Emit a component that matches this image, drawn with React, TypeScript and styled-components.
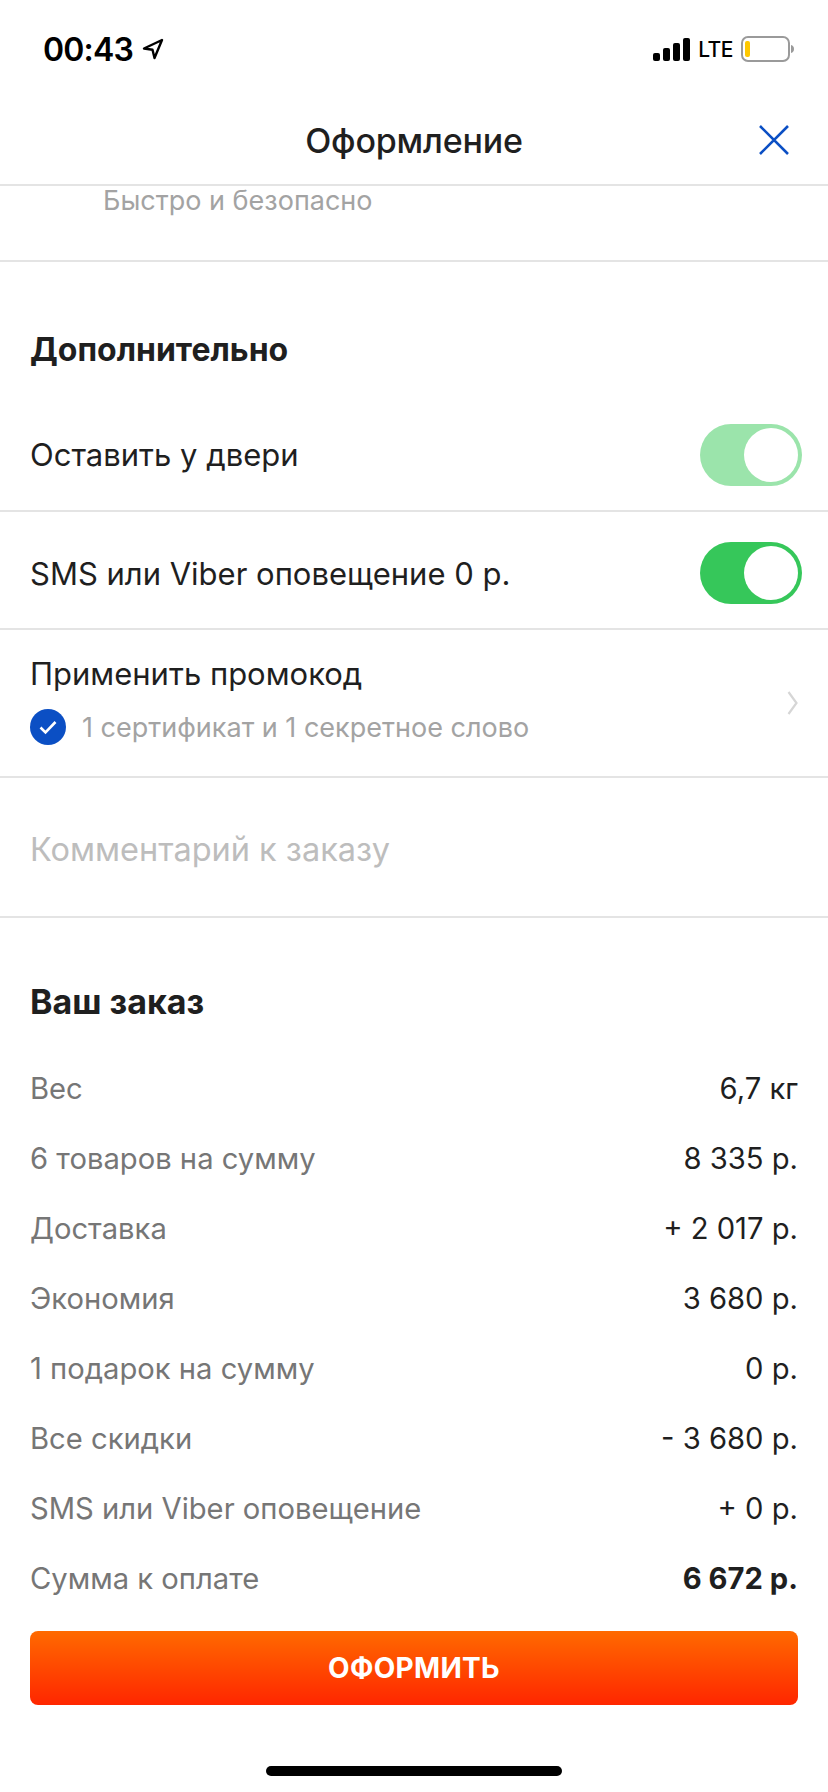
import React from 'react'
import styled, { createGlobalStyle } from 'styled-components'

const GlobalStyle = createGlobalStyle`
  html, body {
    margin: 0;
    padding: 0;
    background: #fff;
  }
  * {
    box-sizing: border-box;
  }
`

const Page = styled.div`
  width: 828px;
  height: 1792px;
  overflow: hidden;
  display: flex;
  flex-direction: column;
  background: #fff;
  color: #1f1f1f;
  font-family: Inter, "Noto Sans", sans-serif;
`

const StatusBar = styled.div`
  height: 88px;
  padding: 10px 34px 0 43px;
  display: flex;
  align-items: center;
  justify-content: space-between;
  color: #000;
`

const Time = styled.div`
  display: flex;
  align-items: center;
  gap: 9px;
  font-size: 32px;
  font-weight: 600;
  letter-spacing: -0.8px;
`

const StatusRight = styled.div`
  display: flex;
  align-items: center;
  gap: 8px;
`

const Lte = styled.span`
  font-size: 21px;
  font-weight: 500;
  letter-spacing: -0.5px;
`

const Header = styled.header`
  height: 98px;
  padding: 8px 39px 0;
  display: flex;
  align-items: center;
  justify-content: space-between;
  border-bottom: 2px solid #e4e4e4;
`

const HeaderSide = styled.div`
  width: 30px;
  height: 30px;
`

const Title = styled.h1`
  margin: 0;
  font-size: 34px;
  font-weight: 500;
  letter-spacing: -0.2px;
`

const PaymentNote = styled.div`
  height: 76px;
  padding: 0 0 45px 103px;
  display: flex;
  align-items: center;
  font-size: 27px;
  color: #a3a3a3;
  border-bottom: 2px solid #e4e4e4;
`

const SectionTitle = styled.h2<{ $height: number; $size: number }>`
  margin: 0;
  height: ${p => p.$height}px;
  padding: 0 30px;
  display: flex;
  align-items: flex-end;
  font-size: ${p => p.$size}px;
  font-weight: 700;
`

const ToggleRow = styled.div<{ $height: number; $top: number }>`
  height: ${p => p.$height}px;
  padding: ${p => p.$top}px 26px 0 30px;
  display: flex;
  align-items: center;
  justify-content: space-between;
  font-size: 31px;
  border-bottom: 2px solid #e4e4e4;
`

const Track = styled.div<{ $pale?: boolean }>`
  width: 102px;
  height: 62px;
  padding: 4px;
  display: flex;
  justify-content: flex-end;
  border-radius: 31px;
  background: ${p => (p.$pale ? '#9be4ab' : '#36c75a')};
`

const Knob = styled.div`
  width: 54px;
  height: 54px;
  border-radius: 50%;
  background: #fff;
`

const PromoRow = styled.div`
  height: 148px;
  padding: 0 30px;
  display: flex;
  align-items: center;
  justify-content: space-between;
  border-bottom: 2px solid #e4e4e4;
`

const PromoText = styled.div`
  padding-bottom: 6px;
  display: flex;
  flex-direction: column;
  gap: 17px;
  font-size: 31px;
`

const PromoHint = styled.div`
  display: flex;
  align-items: center;
  gap: 16px;
  font-size: 27px;
  color: #a3a3a3;
`

const Comment = styled.div`
  height: 140px;
  padding: 5px 30px 0;
  display: flex;
  align-items: center;
  font-size: 32.5px;
  color: #bdbdbd;
  border-bottom: 2px solid #e4e4e4;
`

const Summary = styled.div`
  margin-top: 31px;
  display: flex;
  flex-direction: column;
`

const SummaryRow = styled.div`
  height: 70.1px;
  padding: 0 30px;
  display: flex;
  align-items: center;
  justify-content: space-between;
  font-size: 29.2px;
`

const SummaryLabel = styled.span`
  color: #767676;
`

const SummaryValue = styled.span<{ $bold?: boolean }>`
  font-weight: ${p => (p.$bold ? 700 : 400)};
`

const SubmitButton = styled.button`
  margin: 17px 30px 0;
  height: 74px;
  flex-shrink: 0;
  border: 0;
  border-radius: 8px;
  background: linear-gradient(180deg, #ff6a00 0%, #ff2600 100%);
  color: #fff;
  font-family: inherit;
  font-size: 28px;
  font-weight: 700;
  letter-spacing: 0.3px;
`

const HomeIndicator = styled.div`
  margin: 61px auto 0;
  width: 296px;
  height: 10px;
  flex-shrink: 0;
  border-radius: 5px;
  background: #000;
`

const rows: [string, string][] = [
  ['Вес', '6,7 кг'],
  ['6 товаров на сумму', '8 335 р.'],
  ['Доставка', '+ 2 017 р.'],
  ['Экономия', '3 680 р.'],
  ['1 подарок на сумму', '0 р.'],
  ['Все скидки', '- 3 680 р.'],
  ['SMS или Viber оповещение', '+ 0 р.'],
]

const App = () => {
  return (
    <Page>
      <GlobalStyle />
      <StatusBar>
        <Time>
          00:43
          <svg width="22" height="22" viewBox="0 0 22 22" fill="none">
            <path d="M20 2 2 10.5l8.5 1.2L12.5 20z" stroke="#000" strokeWidth="2.4" strokeLinejoin="round" />
          </svg>
        </Time>
        <StatusRight>
          <svg width="37" height="23" viewBox="0 0 37 23">
            <rect x="0" y="15" width="7" height="8" rx="2" />
            <rect x="10" y="10" width="7" height="13" rx="2" />
            <rect x="20" y="5" width="7" height="18" rx="2" />
            <rect x="30" y="0" width="7" height="23" rx="2" />
          </svg>
          <Lte>LTE</Lte>
          <svg width="53" height="26" viewBox="0 0 53 26">
            <rect x="1" y="1" width="47" height="24" rx="6" fill="none" stroke="#9a9a9a" strokeWidth="2" />
            <rect x="4" y="5" width="5" height="16" rx="2" fill="#ffc800" />
            <path d="M50 9c2 .6 3 2 3 4s-1 3.400-3 4z" fill="#9a9a9a" />
          </svg>
        </StatusRight>
      </StatusBar>
      <Header>
        <HeaderSide />
        <Title>Оформление</Title>
        <svg width="30" height="30" viewBox="0 0 30 30">
          <path d="M1 1l28 28M29 1 1 29" stroke="#0b4fc4" strokeWidth="2.6" fill="none" />
        </svg>
      </Header>
      <PaymentNote>Быстро и безопасно</PaymentNote>
      <SectionTitle $height={107} $size={32}>Дополнительно</SectionTitle>
      <ToggleRow $height={143} $top={30}>
        Оставить у двери
        <Track $pale><Knob /></Track>
      </ToggleRow>
      <ToggleRow $height={118} $top={6}>
        SMS или Viber оповещение 0 р.
        <Track><Knob /></Track>
      </ToggleRow>
      <PromoRow>
        <PromoText>
          Применить промокод
          <PromoHint>
            <svg width="36" height="36" viewBox="0 0 36 36">
              <circle cx="18" cy="18" r="18" fill="#0b4fc4" />
              <path d="M10.5 18.5l5 5 10-10.5" stroke="#fff" strokeWidth="2.6" fill="none" />
            </svg>
            1 сертификат и 1 секретное слово
          </PromoHint>
        </PromoText>
        <svg width="11" height="24" viewBox="0 0 11 24">
          <path d="M1.5 1 9.5 12 1.5 23" stroke="#d6d6d6" strokeWidth="2.2" fill="none" />
        </svg>
      </PromoRow>
      <Comment>Комментарий к заказу</Comment>
      <SectionTitle $height={104} $size={34}>Ваш заказ</SectionTitle>
      <Summary>
        {rows.map(([label, value]) => (
          <SummaryRow key={label}>
            <SummaryLabel>{label}</SummaryLabel>
            <SummaryValue>{value}</SummaryValue>
          </SummaryRow>
        ))}
        <SummaryRow>
          <SummaryLabel>Сумма к оплате</SummaryLabel>
          <SummaryValue $bold>6 672 р.</SummaryValue>
        </SummaryRow>
      </Summary>
      <SubmitButton>ОФОРМИТЬ</SubmitButton>
      <HomeIndicator />
    </Page>
  )
}

export default App
